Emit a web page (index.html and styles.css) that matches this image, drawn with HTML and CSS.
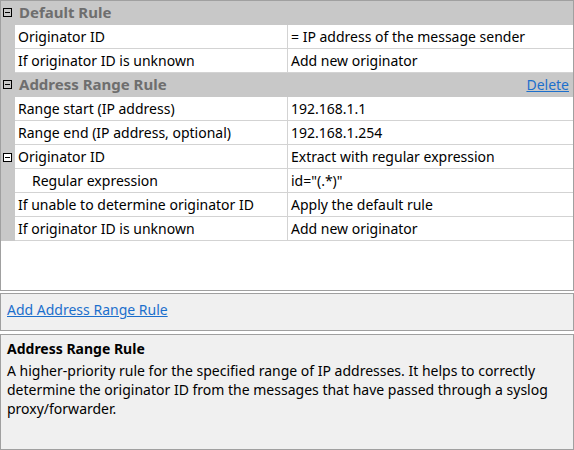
FILE: index.html
```html
<!DOCTYPE html>
<html lang="en">
<head>
<meta charset="UTF-8">
<title>Address Range Rules</title>
<link rel="stylesheet" href="styles.css">
</head>
<body>
<div class="grid">
  <div class="row head">
    <span class="gutter"><span class="toggle"></span></span>
    <span class="title">Default Rule</span>
  </div>
  <div class="row">
    <span class="gutter"></span>
    <span class="name">Originator ID</span>
    <span class="value">= IP address of the message sender</span>
  </div>
  <div class="row">
    <span class="gutter"></span>
    <span class="name">If originator ID is unknown</span>
    <span class="value">Add new originator</span>
  </div>
  <div class="row head">
    <span class="gutter"><span class="toggle"></span></span>
    <span class="title">Address Range Rule</span>
    <a class="delete" href="#">Delete</a>
  </div>
  <div class="row">
    <span class="gutter"></span>
    <span class="name">Range start (IP address)</span>
    <span class="value">192.168.1.1</span>
  </div>
  <div class="row">
    <span class="gutter"></span>
    <span class="name">Range end (IP address, optional)</span>
    <span class="value">192.168.1.254</span>
  </div>
  <div class="row">
    <span class="gutter"><span class="toggle"></span></span>
    <span class="name">Originator ID</span>
    <span class="value">Extract with regular expression</span>
  </div>
  <div class="row">
    <span class="gutter"></span>
    <span class="name sub">Regular expression</span>
    <span class="value">id="(.*)"</span>
  </div>
  <div class="row">
    <span class="gutter"></span>
    <span class="name">If unable to determine originator ID</span>
    <span class="value">Apply the default rule</span>
  </div>
  <div class="row">
    <span class="gutter"></span>
    <span class="name">If originator ID is unknown</span>
    <span class="value">Add new originator</span>
  </div>
</div>

<div class="panel actions">
  <a href="#">Add Address Range Rule</a>
</div>

<div class="panel help">
  <h3>Address Range Rule</h3>
  <p>A higher-priority rule for the specified range of IP addresses. It helps to correctly<br>determine the originator ID from the messages that have passed through a syslog proxy/forwarder.</p>
</div>
</body>
</html>
```

FILE: styles.css
```css
body {
  margin: 0;
  font-family: "Noto Sans", "Open Sans", sans-serif;
  font-size: 14px;
  color: #000;
  background: #fff;
}
a {
  color: #1c6fcc;
}
.grid {
  box-sizing: border-box;
  height: 291px;
  border: 1px solid #a0a0a0;
  background: #fff;
}
.row {
  display: flex;
  align-items: stretch;
  height: 24px;
  box-sizing: border-box;
  line-height: 23px;
}
.row .name,
.row .value {
  border-bottom: 1px solid #d3d3d3;
}
.gutter {
  width: 14px;
  flex: none;
  background: #c8c8c8;
  display: flex;
  align-items: center;
  padding-left: 2px;
  box-sizing: border-box;
}
.toggle {
  position: relative;
  width: 9px;
  height: 9px;
  box-sizing: border-box;
  border: 1px solid #000;
  background: #fff;
}
.head .toggle {
  background: transparent;
}
.toggle::after {
  content: "";
  position: absolute;
  left: 1px;
  top: 3px;
  width: 5px;
  height: 1px;
  background: #000;
}
.name {
  width: 273px;
  flex: none;
  padding-left: 3px;
  border-right: 1px solid #d3d3d3;
  box-sizing: border-box;
  white-space: nowrap;
}
.name.sub {
  padding-left: 17px;
}
.value {
  flex: 1;
  padding-left: 3px;
  white-space: nowrap;
}
.head {
  background: #c8c8c8;
  border-bottom: 1px solid #c8c8c8;
}
.head .title {
  flex: 1;
  padding-left: 4px;
  font-weight: bold;
  font-size: 15px;
  color: #6e6e6e;
}
.delete {
  padding-right: 4px;
}
.panel {
  box-sizing: border-box;
  border: 1px solid #a0a0a0;
  background: #f0f0f0;
}
.actions {
  margin-top: 2px;
  height: 38px;
  padding: 6px 6px 0;
  line-height: 20px;
}
.help {
  margin-top: 3px;
  height: 116px;
  padding: 5px 6px 0;
}
.help h3 {
  margin: 0;
  font-size: 14px;
  line-height: 18px;
}
.help p {
  margin: 3px 0 0;
  line-height: 19px;
}
```
